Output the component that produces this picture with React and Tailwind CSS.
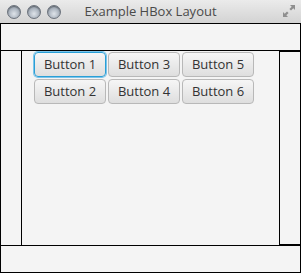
import React from "react";

function Light() {
  return (
    <div className="w-[14px] h-[14px] rounded-full border border-[#6b727c] bg-[radial-gradient(circle_at_50%_65%,#dfe4ea_0%,#a9b2bd_55%,#7d8793_100%)] shadow-[inset_0_1px_1px_rgba(0,0,0,0.35)]" />
  );
}

function Btn({ label, focused }) {
  return (
    <div
      className={
        "w-[72px] h-[25px] flex items-center justify-center rounded-[4px] text-[13px] text-[#333333] bg-[linear-gradient(#f6f6f6,#dedede)] " +
        (focused
          ? "border border-[#2a9fd6] shadow-[0_0_0_1px_#7cc4ea]"
          : "border border-[#b8b8b8]")
      }
      style={{ fontFamily: '"Open Sans", "DejaVu Sans", sans-serif' }}
    >
      {label}
    </div>
  );
}

export default function App() {
  return (
    <div className="w-[301px] h-[273px] flex flex-col bg-[#f4f4f4] overflow-hidden">
      <div className="h-[23px] shrink-0 relative flex items-center bg-[linear-gradient(#ebebeb,#d3d3d3)]">
        <div className="flex gap-[6px] pl-[7px]">
          <Light />
          <Light />
          <Light />
        </div>
        <div
          className="absolute inset-0 flex items-center justify-center text-[13px] text-[#4a4a4a]"
          style={{ fontFamily: '"Open Sans", "DejaVu Sans", sans-serif' }}
        >
          Example HBox Layout
        </div>
        <svg className="absolute right-[5px] top-[4px]" width="14" height="14" viewBox="0 0 14 14">
          <path d="M8 1 H13 V6 L11.3 4.3 L9 6.6 L7.4 5 L9.7 2.7 Z" fill="#8f8f8f" />
          <path d="M6 13 H1 V8 L2.7 9.7 L5 7.4 L6.6 9 L4.3 11.3 Z" fill="#8f8f8f" />
        </svg>
      </div>
      <div className="h-[28px] shrink-0 border border-black" />
      <div className="flex-1 flex">
        <div className="w-[22px] border-l border-r border-black" />
        <div className="flex-1 pl-[12px] pt-[1px]">
          <div className="grid grid-rows-2 grid-flow-col gap-[2px] w-max">
            <Btn label="Button 1" focused />
            <Btn label="Button 2" />
            <Btn label="Button 3" />
            <Btn label="Button 4" />
            <Btn label="Button 5" />
            <Btn label="Button 6" />
          </div>
        </div>
        <div className="w-[22px] border border-black" />
      </div>
      <div className="h-[28px] shrink-0 border border-black" />
    </div>
  );
}
